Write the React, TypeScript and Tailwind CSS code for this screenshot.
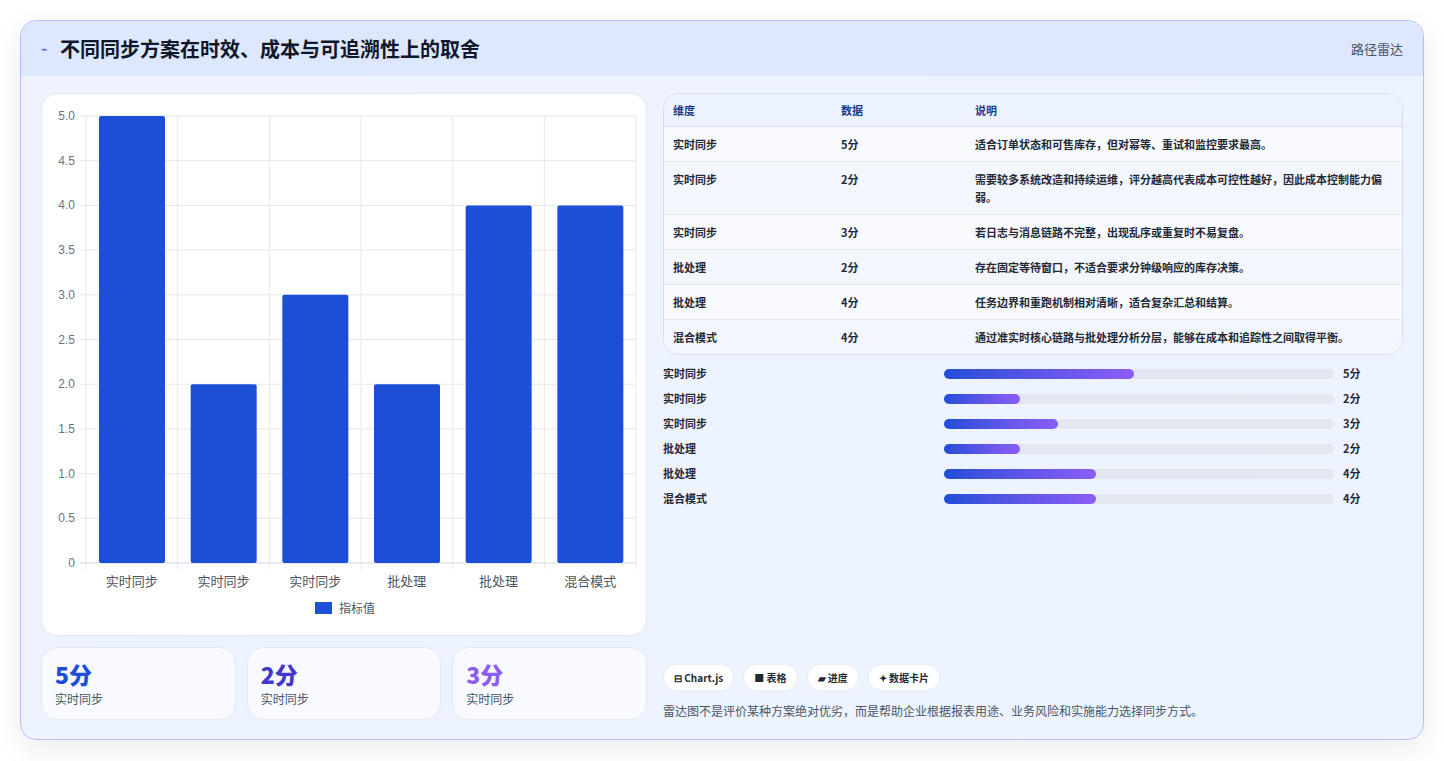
const font = { fontFamily: '"Noto Sans CJK SC", "Noto Sans", sans-serif' };

const rows = [
  { name: "实时同步", value: 5, note: "适合订单状态和可售库存，但对幂等、重试和监控要求最高。" },
  { name: "实时同步", value: 2, note: "需要较多系统改造和持续运维，评分越高代表成本可控性越好，因此成本控制能力偏弱。" },
  { name: "实时同步", value: 3, note: "若日志与消息链路不完整，出现乱序或重复时不易复盘。" },
  { name: "批处理", value: 2, note: "存在固定等待窗口，不适合要求分钟级响应的库存决策。" },
  { name: "批处理", value: 4, note: "任务边界和重跑机制相对清晰，适合复杂汇总和结算。" },
  { name: "混合模式", value: 4, note: "通过准实时核心链路与批处理分析分层，能够在成本和追踪性之间取得平衡。" },
];

function BarChart() {
  const left = 44, right = 594, top = 22, bottom = 469;
  const colW = (right - left) / 6;
  const y = (v: number) => bottom - (v / 5) * (bottom - top);
  const ticks = [0, 0.5, 1, 1.5, 2, 2.5, 3, 3.5, 4, 4.5, 5];
  return (
    <svg width="606" height="541" className="block">
      {ticks.map((t) => (
        <g key={t}>
          <line x1={left - 6} x2={right} y1={y(t)} y2={y(t)} stroke={t === 0 ? "#cbd5e1" : "#e5e7eb"} />
          <text x={left - 11} y={y(t) + 4} textAnchor="end" fontSize="12" fill="#6b7280" fontFamily="Liberation Sans, sans-serif">
            {t === 0 ? "0" : t.toFixed(1)}
          </text>
        </g>
      ))}
      {Array.from({ length: 7 }).map((_, i) => (
        <line key={i} x1={left + i * colW} x2={left + i * colW} y1={top} y2={bottom + 6} stroke="#e5e7eb" />
      ))}
      {rows.map((r, i) => (
        <g key={i}>
          <rect x={left + i * colW + 13} y={y(r.value)} width={66} height={bottom - y(r.value)} rx="2" fill="#1d4ed8" />
          <text x={left + i * colW + colW / 2} y={492} textAnchor="middle" fontSize="13" fill="#4b5563" style={font}>
            {r.name}
          </text>
        </g>
      ))}
      <rect x={273} y={508} width={17} height={12} fill="#1d4ed8" />
      <text x={297} y={519} fontSize="12" fill="#4b5563" style={font}>指标值</text>
    </svg>
  );
}

export default function App() {
  const stats = [
    { v: "5分", c: "text-[#1d4ed8]" },
    { v: "2分", c: "text-[#4338ca]" },
    { v: "3分", c: "text-[#8b5cf6]" },
  ];
  return (
    <div className="min-h-[761px] bg-white p-5" style={font}>
      <div className="overflow-hidden rounded-2xl border border-[#b4c0ee] bg-gradient-to-br from-[#eef3fd] to-[#edf4ff] shadow-[0_10px_30px_rgba(15,23,42,0.08)]">
        <div className="flex h-[55px] items-center justify-between bg-[#dde7fd] px-5">
          <div className="flex items-center gap-3">
            <span className="text-[11px] text-[#3b5bdb]">⌁</span>
            <h1 className="text-[20px] font-bold text-[#0f172a]">不同同步方案在时效、成本与可追溯性上的取舍</h1>
          </div>
          <span className="text-[13px] text-[#475569]">路径雷达</span>
        </div>
        <div className="flex gap-4 px-5 pb-[19px] pt-[17px]">
          <div className="flex w-[606px] flex-col gap-[11px]">
            <div className="rounded-2xl border border-[#e2e8f5] bg-white">
              <BarChart />
            </div>
            <div className="grid grid-cols-3 gap-[11px]">
              {stats.map((s, i) => (
                <div key={i} className="h-[73px] rounded-2xl border border-[#e2e8f5] bg-[#f8faff] px-[13px] pt-[10px]">
                  <div className={`text-[23px] font-extrabold leading-8 ${s.c}`}>{s.v}</div>
                  <div className="text-[12px] text-[#475569]">实时同步</div>
                </div>
              ))}
            </div>
          </div>
          <div className="flex flex-1 flex-col">
            <div className="overflow-hidden rounded-2xl border border-[#d7def0] bg-[#f8fafd]">
              <table className="w-full text-left text-[11px] text-[#1f2937]">
                <thead className="bg-[#edf3fe] text-[#1e3a8a]">
                  <tr className="h-[32px] border-b border-[#d7def0]">
                    <th className="w-[177px] pl-[9px] font-semibold">维度</th>
                    <th className="w-[134px] font-semibold">数据</th>
                    <th className="font-semibold">说明</th>
                  </tr>
                </thead>
                <tbody>
                  {rows.map((r, i) => (
                    <tr key={i} className={`border-b border-[#e2e8f0] last:border-0 ${i % 2 === 1 ? "bg-[#f3f6fc]" : "bg-[#f8fafd]"}`}>
                      <td className="py-[8px] pl-[9px] align-top font-semibold leading-[18px]">{r.name}</td>
                      <td className="py-[8px] align-top font-semibold leading-[18px]">{r.value}分</td>
                      <td className="py-[8px] pr-2 align-top font-semibold leading-[18px]">{r.note}</td>
                    </tr>
                  ))}
                </tbody>
              </table>
            </div>
            <div className="mt-[10px] flex flex-col gap-[7px]">
              {rows.map((r, i) => (
                <div key={i} className="flex h-[18px] items-center text-[11px] font-semibold text-[#1f2937]">
                  <span className="w-[281px]">{r.name}</span>
                  <div className="h-[10px] w-[390px] rounded-full bg-[#e2e7f0]">
                    <div className="h-full rounded-full bg-gradient-to-r from-[#1d4ed8] to-[#8b5cf6]" style={{ width: `${r.value * 38}px` }} />
                  </div>
                  <span className="ml-[9px]">{r.value}分</span>
                </div>
              ))}
            </div>
            <div className="mt-auto flex gap-[9px]">
              {["⊟ Chart.js", "■ 表格", "▰ 进度", "✦ 数据卡片"].map((c) => (
                <span key={c} className="rounded-full border border-[#e8edf7] bg-white px-[10px] py-[5px] text-[10px] font-semibold text-[#1f2937]">{c}</span>
              ))}
            </div>
            <p className="mt-[11px] text-[12px] text-[#475569]">雷达图不是评价某种方案绝对优劣，而是帮助企业根据报表用途、业务风险和实施能力选择同步方式。</p>
          </div>
        </div>
      </div>
    </div>
  );
}
